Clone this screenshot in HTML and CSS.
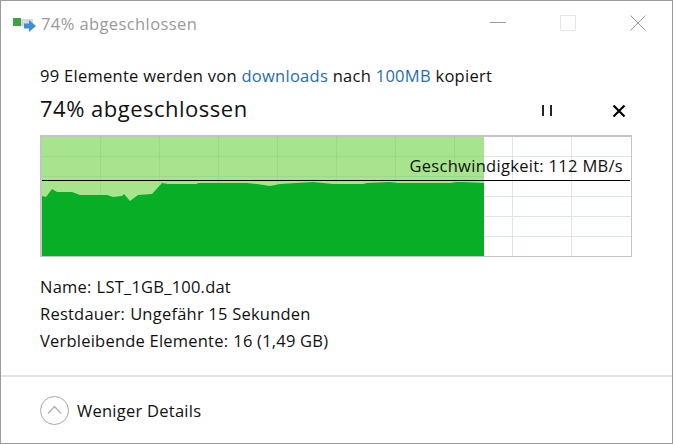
FILE: index.html
```html
<!DOCTYPE html>
<html lang="de">
<head>
<meta charset="utf-8">
<title>74% abgeschlossen</title>
<link rel="stylesheet" href="styles.css">
</head>
<body>
<div class="window">
  <header class="titlebar">
    <svg class="app-icon" width="24" height="20" viewBox="0 0 24 20">
      <rect x="0" y="4" width="8" height="8" fill="#3fa142"/>
      <rect x="8" y="5" width="12" height="7" fill="#d9d9d9"/>
      <path d="M11 9.500h5V6l7 6-7 6v-3.500h-5z" fill="#3b8fd4"/>
    </svg>
    <span class="title">74% abgeschlossen</span>
    <div class="controls">
      <svg width="16" height="16" viewBox="0 0 16 16"><path d="M0 7.500h16" stroke="#999" fill="none"/></svg>
      <svg width="16" height="16" viewBox="0 0 16 16"><rect x=".5" y=".5" width="15" height="15" fill="none" stroke="#e6e6e6"/></svg>
      <svg width="16" height="16" viewBox="0 0 16 16"><path d="M.5.500l15 15M15.500.500l-15 15" stroke="#999" fill="none"/></svg>
    </div>
  </header>
  <main class="content">
    <p class="summary">99 Elemente werden von <a class="link">downloads</a> nach <a class="link">100MB</a> kopiert</p>
    <div class="progress-head">
      <h1 class="percent">74% abgeschlossen</h1>
      <div class="actions">
        <svg width="12" height="12" viewBox="0 0 12 12"><path d="M2 0v11M10 0v11" stroke="#000" stroke-width="1.700" fill="none"/></svg>
        <svg width="14" height="14" viewBox="0 0 14 14"><path d="M1.500 1.500l11 11M12.500 1.500l-11 11" stroke="#000" stroke-width="2.200" fill="none"/></svg>
      </div>
    </div>
    <div class="graph">
      <svg class="graph-svg" width="589" height="119" viewBox="42 138 589 119">
        <rect x="42" y="138" width="442" height="119" fill="#a8e48e"/>
        <g class="grid-light">
          <path d="M100.500 138v119M159.500 138v119M218.500 138v119M277.500 138v119M336.500 138v119M395.500 138v119M454.500 138v119"/>
          <path d="M42 157.500h442M42 177.500h442"/>
        </g>
        <g class="grid-blank">
          <path d="M512.500 138v119M571.500 138v119"/>
          <path d="M484 157.500h147M484 197.500h147M484 217.500h147M484 237.500h147"/>
        </g>
        <path class="area" d="M42 197L46 198L52 190L57 193L72 193L80 196L92 196L107 196L113 198L122 197L124 195L130 202L138 196L152 195L162 184L168 185L197 185L198 184L247 184L257 185L270 187L280 185L313 183L333 185L363 185L367 184L390 183L398 184L450 184L457 183L463 183L484 184V257H42Z"/>
        <path class="speed-line" d="M42 181.500H630"/>
      </svg>
      <span class="speed">Geschwindigkeit: 112 MB/s</span>
    </div>
    <dl class="details">
      <div class="row"><dt>Name:</dt><dd>LST_1GB_100.dat</dd></div>
      <div class="row"><dt>Restdauer:</dt><dd>Ungefähr 15 Sekunden</dd></div>
      <div class="row"><dt>Verbleibende Elemente:</dt><dd>16 (1,49 GB)</dd></div>
    </dl>
  </main>
  <footer class="footer">
    <svg width="29" height="29" viewBox="0 0 29 29"><circle cx="14.500" cy="14.500" r="14" fill="none" stroke="#a6a6a6"/><path d="M8 17.500l6.500-7 6.500 7" fill="none" stroke="#b0b0b0" stroke-width="1.300"/></svg>
    <span class="more">Weniger Details</span>
  </footer>
</div>
</body>
</html>
```
FILE: styles.css
```css
* { box-sizing: border-box; }
html, body { margin: 0; padding: 0; }
body { width: 673px; height: 444px; overflow: hidden; background: #fff; font-family: "Open Sans", "Noto Sans", sans-serif; color: #111; }
.window { width: 673px; height: 444px; display: flex; flex-direction: column; border: 1px solid #9b9b9b; background: #fff; }
.titlebar { height: 45px; flex: none; display: flex; align-items: center; padding: 0 26px 0 12px; }
.app-icon { flex: none; margin-right: 4px; }
.title { font-size: 16.500px; color: #999; letter-spacing: .4px; }
.controls { margin-left: auto; display: flex; gap: 54px; align-items: center; padding-bottom: 2px; }
.content { flex: 1; padding: 0 41px 0 39px; }
.summary { margin: 19px 0 0; font-size: 16.500px; line-height: 22px; letter-spacing: .28px; white-space: nowrap; }
.link { color: #1f6db5; }
.progress-head { display: flex; align-items: center; height: 30px; margin-top: 6px; }
.percent { margin: 0; font-size: 22px; font-weight: 400; letter-spacing: .5px; line-height: 30px; }
.actions { margin-left: auto; display: flex; gap: 59px; align-items: center; padding-right: 5px; padding-top: 5px; }
.graph { position: relative; width: 592px; height: 122px; margin-top: 12px; border: 2px solid #c4c4c4; border-right-width: 1px; border-bottom-width: 1px; }
.graph-svg { display: block; }
.grid-light path { stroke: #9bd98a; fill: none; }
.grid-blank path { stroke: #dbe6e6; fill: none; }
.area { fill: #07ae26; }
.speed-line { stroke: #000; stroke-width: 1; }
.speed { position: absolute; right: 8px; top: 18px; font-size: 16.500px; line-height: 22px; letter-spacing: .3px; white-space: nowrap; }
.details { margin: 16px 0 0; padding: 0; font-size: 16.500px; letter-spacing: .22px; }
.row { display: flex; gap: 5px; height: 27px; line-height: 27px; }
.row dt, .row dd { margin: 0; }
.footer { flex: none; height: 68px; border-top: 2px solid #e3e3e3; display: flex; align-items: center; gap: 8px; padding: 0 0 0 39px; }
.more { font-size: 16.500px; letter-spacing: .25px; }
```
